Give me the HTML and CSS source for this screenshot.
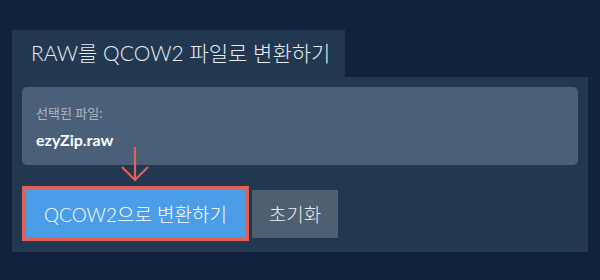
FILE: index.html
```html
<!DOCTYPE html>
<html lang="ko">
<head>
    <meta charset="utf-8" />
    <meta name="viewport" content="width=device-width, initial-scale=1.0" />
    <title>RAW를 QCOW2 파일로 변환하기</title>
    <link rel="stylesheet" href="styles.css">
</head>
<body>
    <div class="converter">
        <div class="tab">RAW를 QCOW2 파일로 변환하기</div>
        <div class="panel">
            <div class="file-box">
                <div class="file-label">선택된 파일:</div>
                <div class="file-name">ezyZip.raw</div>
            </div>
            <div class="actions">
                <div class="convert-wrap">
                    <svg class="hint-arrow" width="30" height="36" viewBox="0 0 30 36">
                        <path d="M14 0 V33 M1 20 L14 33 L27 20" fill="none" stroke="#e0605a" stroke-width="2.2" />
                    </svg>
                    <button class="convert-btn">QCOW2으로 변환하기</button>
                </div>
                <button class="reset-btn">초기화</button>
            </div>
        </div>
    </div>
</body>
</html>
```

FILE: styles.css
```css
body {
    margin: 0;
    padding: 30px 12px 0;
    background: #10233a;
    font-family: Lato, "Noto Sans CJK KR", sans-serif;
    color: #e8edf2;
}

.converter {
    width: 576px;
}

.tab {
    display: inline-block;
    box-sizing: border-box;
    width: 333px;
    height: 47px;
    line-height: 45px;
    padding: 0 19px;
    background: #223750;
    font-size: 21px;
    font-weight: 300;
    white-space: nowrap;
}

.panel {
    background: #223750;
    padding: 10px 10px 11px;
}

.file-box {
    box-sizing: border-box;
    height: 78px;
    padding: 17px 14px 0;
    background: #4a6078;
    border-radius: 5px;
}

.file-label {
    font-size: 13px;
    color: #aab7c5;
    line-height: 18px;
}

.file-name {
    margin-top: 8px;
    font-size: 16px;
    font-weight: 700;
    color: #ffffff;
    line-height: 20px;
}

.actions {
    display: flex;
    align-items: center;
    gap: 3px;
    margin-top: 21px;
}

.convert-wrap {
    position: relative;
}

.hint-arrow {
    position: absolute;
    left: 99px;
    top: -39px;
}

.convert-btn {
    box-sizing: border-box;
    width: 227px;
    height: 55px;
    border: 4px solid #e0605a;
    background: #4b9de8;
    color: #ffffff;
    font-family: inherit;
    font-size: 19px;
    font-weight: 300;
    padding: 0;
    display: block;
}

.reset-btn {
    box-sizing: border-box;
    width: 86px;
    height: 48px;
    border: none;
    background: #4e5f71;
    color: #e8edf2;
    font-family: inherit;
    font-size: 19px;
    font-weight: 300;
    padding: 0;
}
```
